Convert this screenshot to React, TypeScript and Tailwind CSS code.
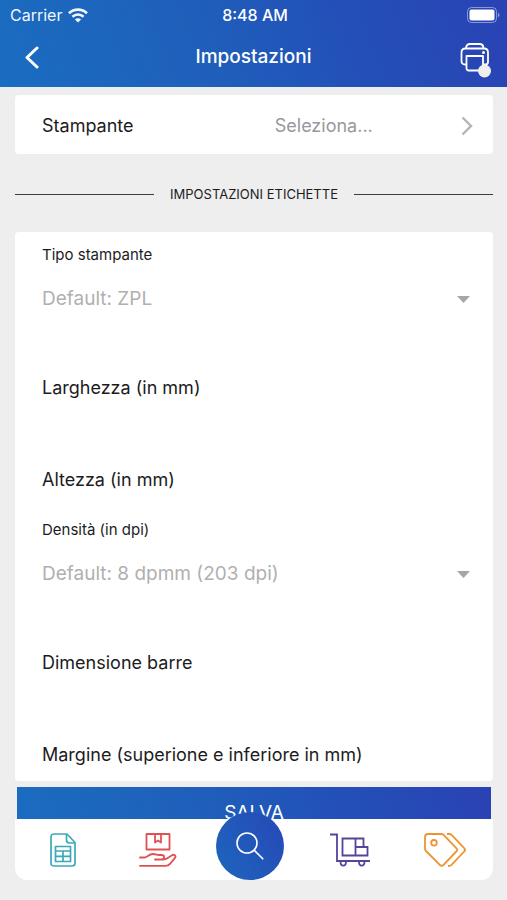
import React, { useId } from "react";

const gradient = "bg-[linear-gradient(70deg,#1a6dc0_0%,#1f5fbb_40%,#2350b8_68%,#2a42b4_100%)]";

function WifiIcon() {
  return (
    <svg width="20" height="15" viewBox="0 0 20 15" fill="none" stroke="#fff" strokeWidth="2.6" aria-hidden="true">
      <path d="M1 5.2C6 .4 14 .4 19 5.2" />
      <path d="M4.4 8.8c3.2-3 8-3 11.2 0" />
      <path d="M10 14.6 6.9 11.5a4.4 4.4 0 0 1 6.2 0z" fill="#fff" stroke="none" />
    </svg>
  );
}

function BatteryIcon() {
  return (
    <svg width="33" height="16" viewBox="0 0 33 16" aria-hidden="true">
      <rect x=".5" y=".5" width="29" height="15" rx="4" fill="none" stroke="#fff" strokeOpacity=".45" />
      <rect x="2.5" y="2.5" width="25" height="11" rx="2" fill="#fff" />
      <path d="M31 5.8c2 .8 2 3.6 0 4.4z" fill="#fff" fillOpacity=".5" />
    </svg>
  );
}

function PrinterIcon() {
  return (
    <svg width="32" height="36" viewBox="0 0 32 36" fill="none" stroke="#fff" strokeWidth="1.8" strokeLinejoin="round" aria-hidden="true">
      <path d="M7 6.500C7 3.500 8.500 2 11 2h9.500c2.500 0 4 1.500 4 4.500" />
      <path d="M7 22.500H6c-2.500 0-3.500-1.500-3.500-3.500v-8.500c0-2.500 1.500-4 4-4h18.500c2.500 0 4 1.500 4 4V20c0 1.500-1 2.500-2.500 2.500h-2" />
      <path d="M7.500 14h16.500v14.500H9.500c-1 0-2-1-2-2z" />
      <circle cx="24.500" cy="10.500" r="1.500" fill="#fff" stroke="none" />
      <circle cx="25.500" cy="29" r="6.500" fill="#eeeeef" stroke="none" />
    </svg>
  );
}

function SheetIcon() {
  return (
    <svg width="26" height="34" viewBox="0 0 26 34" fill="none" stroke="#3ba9b8" strokeWidth="1.700" strokeLinejoin="round" aria-hidden="true">
      <path d="M4 1h13l8 8.500V30c0 2-1 3-3 3H4c-2 0-3-1-3-3V4c0-2 1-3 3-3z" />
      <path d="M16.500 1.500V7c0 2 1 3 3 3h5" />
      <path d="M5.500 13.500h15v15h-15zM5.500 18h15M5.500 23.300h15M13 18v10.500" />
    </svg>
  );
}

function HandBoxIcon() {
  return (
    <svg width="38" height="34" viewBox="0 0 38 34" fill="none" stroke="#e05252" strokeWidth="1.800" strokeLinejoin="round" strokeLinecap="round" aria-hidden="true">
      <path d="M7.500 1h23v15.500h-23z" />
      <path d="M16 1v8.500l3-2 3 2V1" />
      <path d="M1 24.500h5c3-1 4-3.500 8-3.500 3 0 4 1 6 1h2.500c3.500 0 3.500 4.500 0 4.500H16" />
      <path d="M24 26.500c3 0 4-.7 6-2.300l3-2c2-1.200 4.500.6 3 2.600l-5 6c-1.300 1.500-2.500 2-4.500 2H1" />
    </svg>
  );
}

function TrolleyIcon() {
  return (
    <svg width="42" height="34" viewBox="0 0 42 34" fill="none" stroke="#56439a" strokeWidth="1.800" aria-hidden="true">
      <path d="M1 1.500h7V28h33" />
      <path d="M13.500 5.500h13v17h-13zM26.500 5.500h8v8.500M26.500 14h12v8.500h-12z" />
      <path d="M11.500 28.500c0 5.500 5.500 5.500 5.500 0M30 28.500c0 5.500 5.500 5.500 5.500 0" />
    </svg>
  );
}

function TagsIcon() {
  return (
    <svg width="42" height="34" viewBox="0 0 42 34" fill="none" stroke="#ed9430" strokeWidth="1.800" strokeLinejoin="round" aria-hidden="true">
      <path d="M4 1h13c1.200 0 2 .3 2.800 1.100l12.500 13c1.200 1.200 1.200 2.200 0 3.400L19.500 31.800c-1.200 1.200-2.500 1.200-3.700 0L2 18c-.7-.7-1-1.500-1-2.500V4c0-2 1-3 3-3z" />
      <circle cx="10" cy="9.800" r="2.800" />
      <path d="M23 1h2c1.200 0 2 .3 2.800 1.100l12.400 13c1.200 1.200 1.200 2.200 0 3.400L27.500 31.800c-1 1-2 1.200-3.500 1.200" />
    </svg>
  );
}

function SearchIcon() {
  return (
    <svg width="28" height="28" viewBox="0 0 28 28" fill="none" stroke="#fff" strokeWidth="1.600" strokeLinecap="round" aria-hidden="true">
      <circle cx="11" cy="11" r="10" />
      <path d="m18.300 18.300 8.500 8.500" />
    </svg>
  );
}

function SelectField({ label, option }: { label: string; option: string }) {
  const id = useId();
  return (
    <div className="mb-[59px]">
      <label htmlFor={id} className="block text-[15px] leading-5">{label}</label>
      <div className="relative mt-4 flex items-center">
        <select id={id} className="h-9 w-full appearance-none bg-transparent text-[19px] text-[#b0b0b0] outline-none">
          <option>{option}</option>
        </select>
        <svg className="pointer-events-none absolute right-0" width="13" height="7" viewBox="0 0 13 7" aria-hidden="true">
          <path d="M0 0h13L6.500 7z" fill="#a6a6a6" />
        </svg>
      </div>
    </div>
  );
}

function TextField({ label }: { label: string }) {
  const id = useId();
  return (
    <div className="flex h-6 items-center gap-4">
      <label htmlFor={id} className="text-lg leading-6">{label}</label>
      <input id={id} type="text" inputMode="numeric" className="min-w-0 flex-1 bg-transparent text-lg outline-none" />
    </div>
  );
}

export default function App() {
  return (
    <div className="flex h-screen flex-col bg-[#eeeeee] pb-5 font-['Inter','Liberation_Sans',sans-serif] text-[#1c1c1e]">
      <header className={`shrink-0 text-white ${gradient}`}>
        <div className="grid h-[30px] grid-cols-3 items-center pr-[7px] pl-2.5 text-base leading-5">
          <div className="flex items-center gap-1.5 opacity-95">
            <span>Carrier</span>
            <WifiIcon />
          </div>
          <span className="text-center font-medium">8:48 AM</span>
          <div className="flex justify-end"><BatteryIcon /></div>
        </div>
        <div className="grid h-[57px] grid-cols-[1fr_auto_1fr] items-start px-4">
          <button type="button" aria-label="Indietro" className="flex h-[54px] w-8 items-center justify-center">
            <svg width="14" height="23" viewBox="0 0 14 23" fill="none" stroke="#fff" strokeWidth="3" strokeLinecap="round" strokeLinejoin="round" aria-hidden="true">
              <path d="M12 2 2 11.500 12 21" />
            </svg>
          </button>
          <h1 className="text-[19px] leading-[54px] font-medium">Impostazioni</h1>
          <button type="button" aria-label="Stampante" className="flex h-[60px] w-8 items-center justify-center justify-self-end">
            <PrinterIcon />
          </button>
        </div>
      </header>

      <main className="min-h-0 flex-1 overflow-y-auto pt-2 pr-3.5 pl-[15px] [scrollbar-width:none]">
        <button type="button" className="flex h-[59px] w-full items-center rounded-sm bg-white pt-0.5 pr-5 pl-[27px] text-left text-lg">
          <span className="w-[54%]">Stampante</span>
          <span className="flex-1 text-[#98989c]">Seleziona...</span>
          <svg width="12" height="20" viewBox="0 0 12 20" fill="none" stroke="#b4b4b6" strokeWidth="2.400" aria-hidden="true">
            <path d="m1.500 1.500 8.500 8.500-8.500 8.500" />
          </svg>
        </button>

        <div className="flex h-[78px] items-center gap-4 pt-0.5">
          <span className="h-px flex-1 bg-[#3c3c3c]" />
          <h2 className="text-[13px] leading-5">IMPOSTAZIONI ETICHETTE</h2>
          <span className="h-px flex-1 bg-[#3c3c3c]" />
        </div>

        <form>
          <div className="rounded-sm bg-white pt-[13px] pr-[23px] pb-3.5 pl-[27px]">
            <SelectField label="Tipo stampante" option="Default: ZPL" />
            <div className="mb-7 flex flex-col gap-[68px]">
              <TextField label="Larghezza (in mm)" />
              <TextField label="Altezza (in mm)" />
            </div>
            <SelectField label="Densità (in dpi)" option="Default: 8 dpmm (203 dpi)" />
            <div className="flex flex-col gap-[68px]">
              <TextField label="Dimensione barre" />
              <TextField label="Margine (superione e inferiore in mm)" />
            </div>
          </div>
          <div className="px-0.5 pt-1.5">
            <button type="button" className={`h-[52px] w-full text-[19px] text-white ${gradient}`}>SALVA</button>
          </div>
        </form>
      </main>

      <nav className="relative mr-3.5 ml-[15px] flex h-[61px] shrink-0 items-center rounded-b-xl bg-white">
        <a href="#fogli" aria-label="Fogli" className="flex w-1/5 justify-center"><SheetIcon /></a>
        <a href="#consegne" aria-label="Consegne" className="flex w-1/5 justify-center"><HandBoxIcon /></a>
        <div className="flex h-full w-1/5 items-end justify-center pr-2">
          <button type="button" aria-label="Cerca" className="flex size-[68px] shrink-0 items-center justify-center rounded-full bg-[linear-gradient(60deg,#1d66be,#2748b6)]">
            <SearchIcon />
          </button>
        </div>
        <a href="#magazzino" aria-label="Magazzino" className="flex w-1/5 justify-center"><TrolleyIcon /></a>
        <a href="#etichette" aria-label="Etichette" className="flex w-1/5 justify-center"><TagsIcon /></a>
      </nav>
    </div>
  );
}
